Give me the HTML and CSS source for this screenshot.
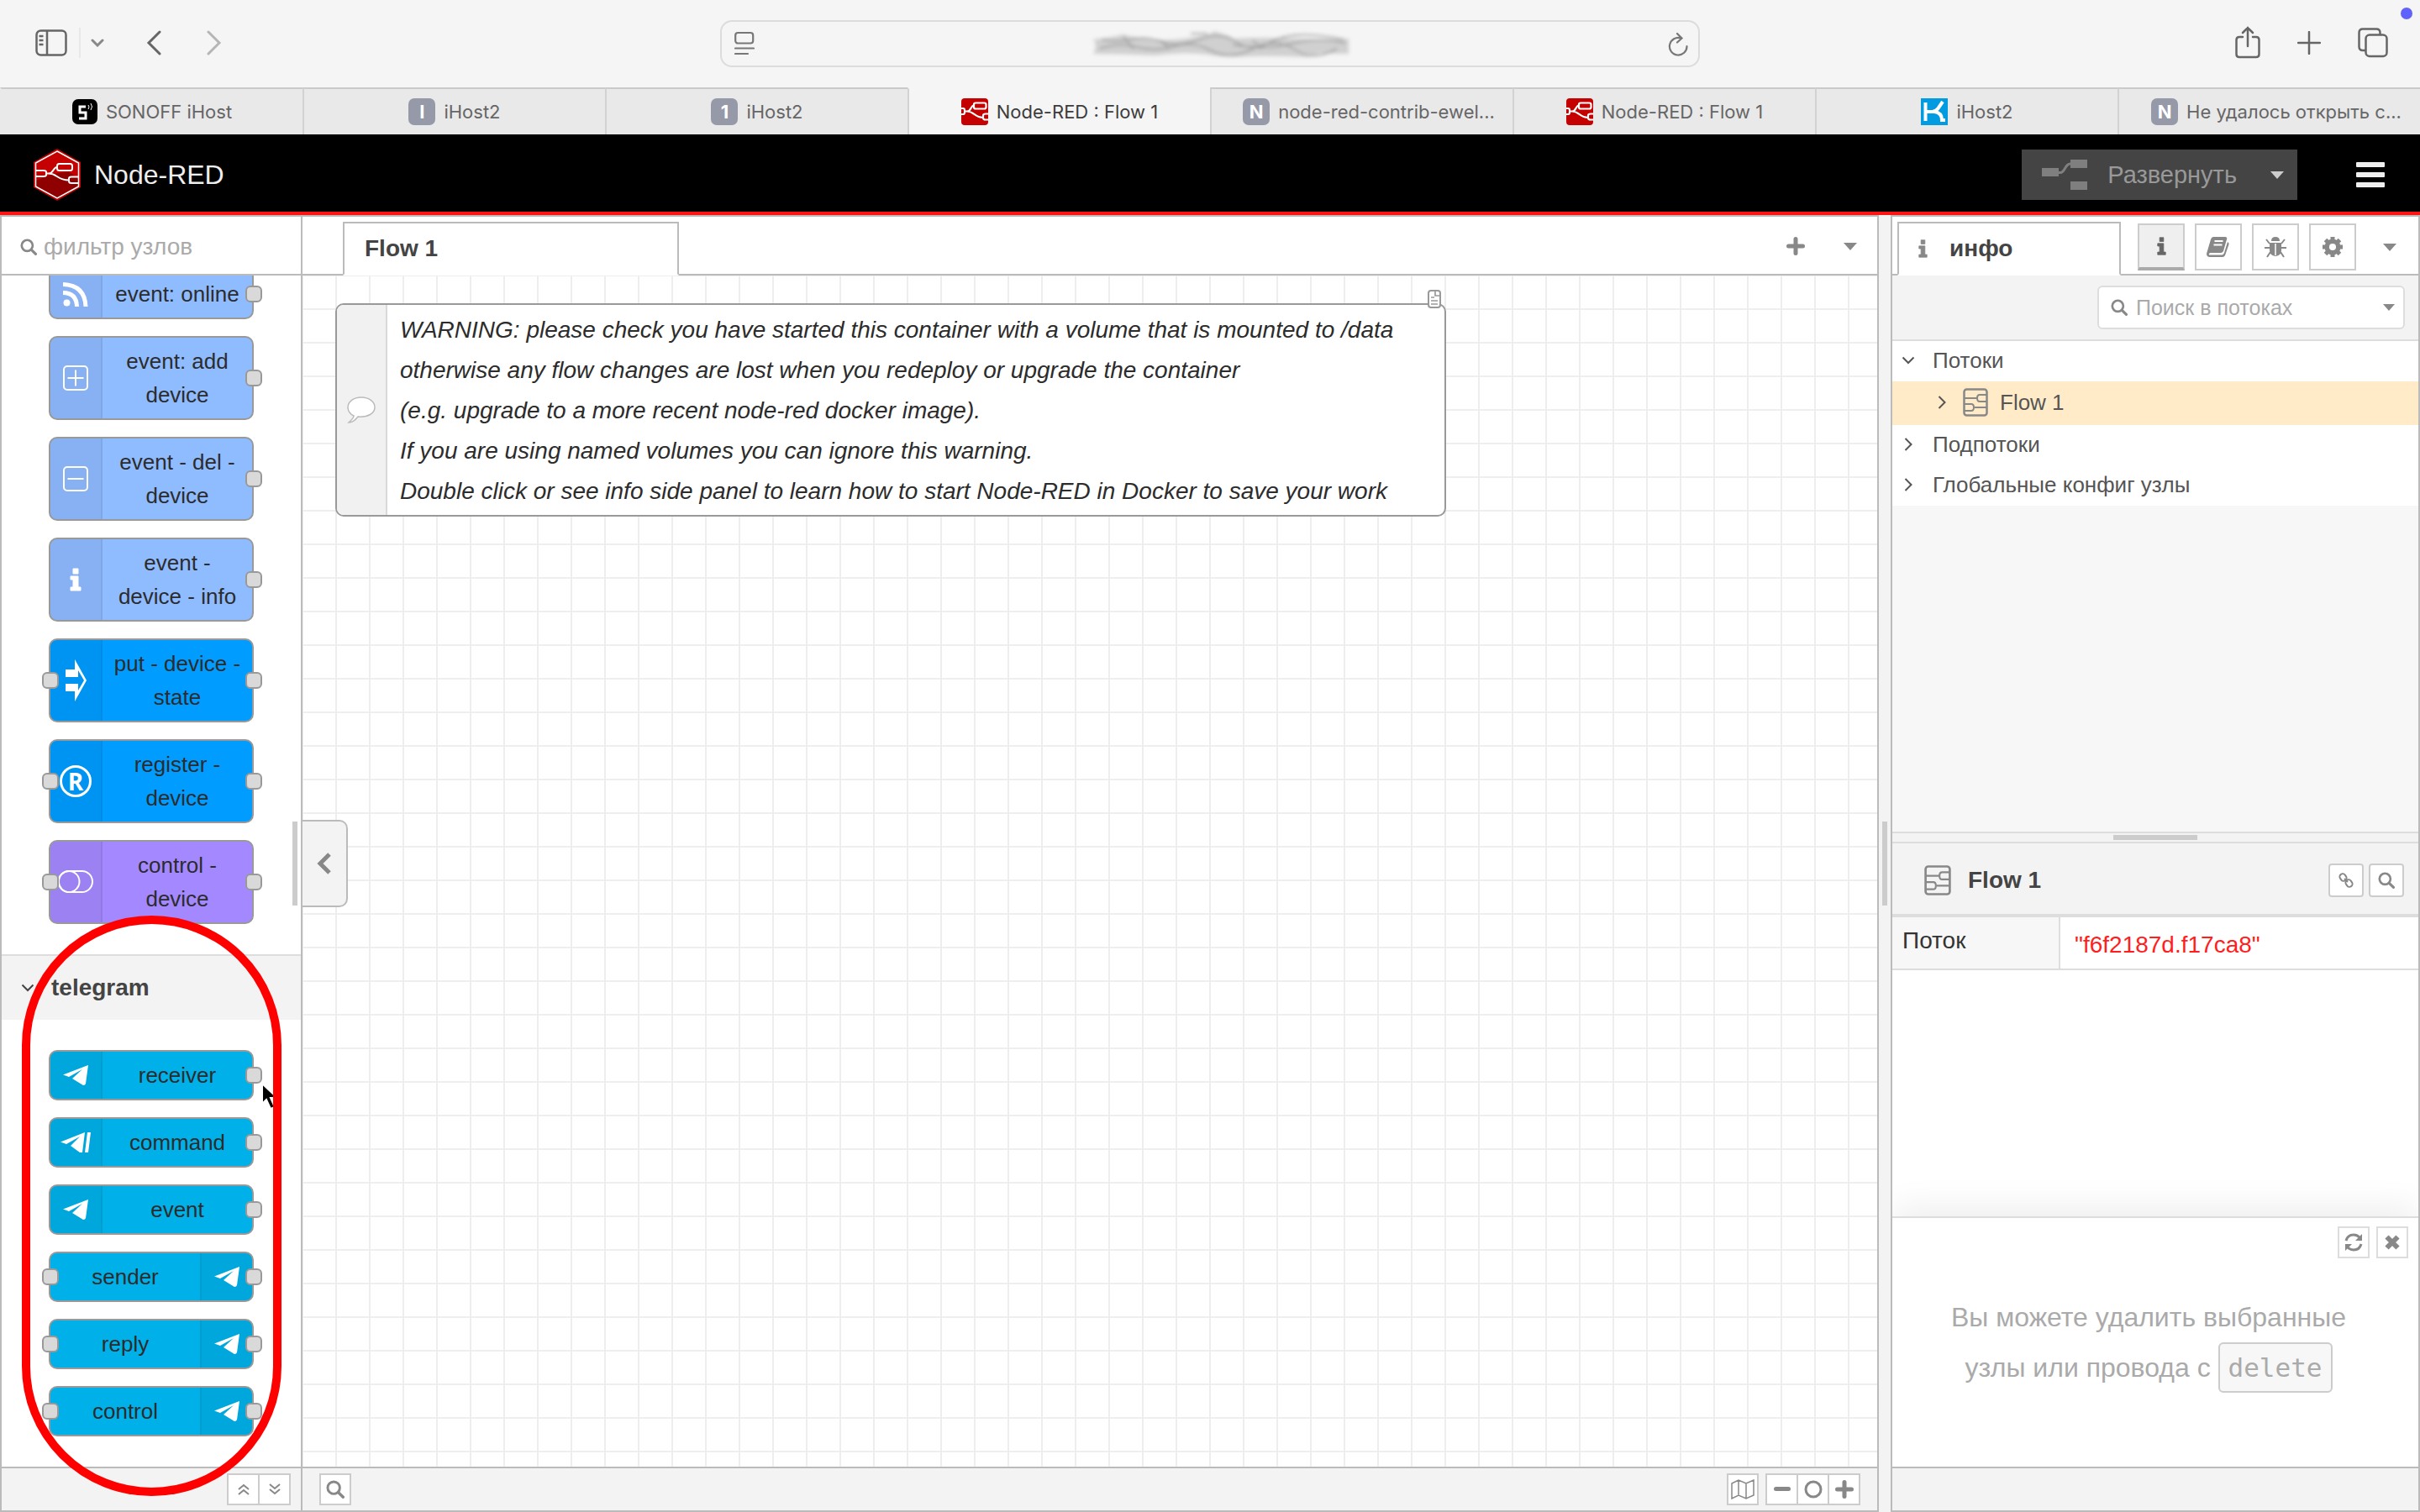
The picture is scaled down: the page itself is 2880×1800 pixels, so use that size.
FILE: index.html
```html
<!DOCTYPE html>
<html lang="ru">
<head>
  <meta charset="UTF-8" />
  <meta name="viewport" content="width=device-width, initial-scale=1.0" />
  <title>Node-RED : Flow 1</title>
  <link rel="stylesheet" href="styles.css">
</head>
<body>
  <!-- Shared icons -->
  <svg class="symbols" width="0" height="0" aria-hidden="true">
    <symbol id="i-search" viewBox="0 0 18 18">
      <circle cx="7.5" cy="7.5" r="5.9" fill="none" stroke="currentColor" stroke-width="2.4" />
      <path d="M12 12l4.6 4.6" stroke="currentColor" stroke-width="2.8" stroke-linecap="round" />
    </symbol>
    <symbol id="i-caret" viewBox="0 0 16 9"><path d="M0 0h16l-8 9z" fill="currentColor" /></symbol>
    <symbol id="i-right" viewBox="0 0 10 18"><path d="M1.5 2l7 7-7 7" fill="none" stroke="currentColor" stroke-width="2" /></symbol>
    <symbol id="i-down" viewBox="0 0 16 10"><path d="M1.500 1.500l6.500 6.500 6.500-6.500" fill="none" stroke="currentColor" stroke-width="2" /></symbol>
    <symbol id="i-plus" viewBox="0 0 22 22"><path d="M11 2.500v17M2.500 11h17" stroke="currentColor" stroke-width="5" stroke-linecap="round" /></symbol>
    <symbol id="i-info" viewBox="0 0 14 28">
      <path d="M4 1h6v6H4zM1 10h9v13h3v4H1v-4h3v-9H1z" fill="currentColor" stroke="currentColor" stroke-linejoin="round" />
    </symbol>
    <symbol id="i-flow" viewBox="0 0 30 34">
      <g fill="none" stroke="currentColor" stroke-width="2">
        <rect x="1.500" y="1.500" width="27" height="31" rx="3" stroke-width="2.500" />
        <path d="M2 12h15M14 23h14M28 8h-8q-3 0-3 4t3 4h8M2 19h8q3 0 3 4t-3 4H2" />
      </g>
    </symbol>
    <symbol id="i-plane" viewBox="0 0 30 24">
      <path d="M30 0L0 11.500l7 2.500L23 5 11 16l13 8q2.500 0 3-2z" fill="#fff" />
    </symbol>
    <symbol id="i-nr" viewBox="0 0 32 32">
      <rect width="32" height="32" rx="4" fill="#c40000" />
      <g fill="none" stroke="#fff" stroke-width="2.200">
        <rect x="15" y="5.500" width="14.500" height="7" rx="2" />
        <path d="M0 12h2q2 0 2 2v3q0 2-2 2H0M32 18.500h-3q-3 0-3 2v3q0 2 3 2h3M4 15.500h3c5 0 4-7 8-7M7 15.500c8 0 9 7.500 19 7.500" />
      </g>
    </symbol>
  </svg>

  <!-- Browser chrome -->
  <div class="toolbar">
    <div class="toolbar-left">
      <button aria-label="Sidebar"><svg width="38" height="32" viewBox="0 0 38 32" fill="none" stroke="currentColor" stroke-width="2.500"><rect x="1.500" y="1.500" width="35" height="29" rx="5" /><path d="M14 2v28M4.500 8h5M4.500 13h5M4.500 18h5" /></svg></button>
      <span class="toolbar-divider"></span>
      <button class="drop" aria-label="Tab groups"><svg width="16" height="10"><path d="M2 2l6 6 6-6" fill="none" stroke="currentColor" stroke-width="3" stroke-linecap="round" /></svg></button>
      <button class="back" aria-label="Back"><svg width="18" height="30"><path d="M16 2L3 15l13 13" fill="none" stroke="currentColor" stroke-width="3" stroke-linecap="round" /></svg></button>
      <button class="forward" aria-label="Forward"><svg width="18" height="30"><path d="M2 2l13 13L2 28" fill="none" stroke="currentColor" stroke-width="3" stroke-linecap="round" /></svg></button>
    </div>
    <div class="address">
      <svg width="24" height="30" viewBox="0 0 24 30" fill="none" stroke="#777" stroke-width="2.200"><rect x="1.200" y="2" width="21" height="12.500" rx="3" /><path d="M1 20.500h22M1 27h15" stroke-linecap="round" /></svg>
      <svg class="smudge" width="330" height="44" viewBox="0 0 330 44">
        <path d="M14 17q20-2 36-6 14 4 34 6t46-2 26-7 26 8q40-2 74 0t62 0v18q-24 0-34-1-10 5-18 5-30-2-64-1-30 2-52-2-26-4-62 1-40-2-74-2 6-10 0-17z" fill="#d0d0d0" />
        <path d="M24 17q18 4 36 0t36 3 44-3 44 3 44-1 84-2M22 28q22-8 44-2t44-1 44 5 50-2 50 1 50-1M130 10h20M180 23q40 7 70-1t64-1M50 14l12 14M94 18l10 10M204 18l10 10" fill="none" stroke="#999" stroke-width="1.500" />
      </svg>
      <svg width="24" height="32" viewBox="0 0 24 32" fill="none" stroke="#777" stroke-width="2.200" stroke-linecap="round"><path d="M15.500 9.500A10.300 10.300 0 1 0 22.500 19M11 4l5.500 5.500-5.500 5" /></svg>
    </div>
    <div class="toolbar-right">
      <button aria-label="Share"><svg width="30" height="40" viewBox="0 0 30 40" fill="none" stroke="currentColor" stroke-width="2.500" stroke-linecap="round"><path d="M9 13H5q-3.500 0-3.500 3.500v17q0 3.500 3.500 3.500h20q3.500 0 3.500-3.500v-17q0-3.500-3.500-3.500h-4M15 24V2M9 8l6-6 6 6" /></svg></button>
      <button aria-label="New tab"><svg width="28" height="28"><path d="M14 1v26M1 14h26" stroke="currentColor" stroke-width="2.500" stroke-linecap="round" /></svg></button>
      <button aria-label="All tabs"><svg width="36" height="36" viewBox="0 0 36 36" fill="none" stroke="currentColor" stroke-width="2.500"><path d="M9 27H6q-4.500 0-4.500-4.500V6Q1.500 1.500 6 1.500h16q4.500 0 4.500 4.500v2.500" /><rect x="9.500" y="8.500" width="25" height="25.500" rx="4.500" /></svg></button>
    </div>
    <span class="status-dot"></span>
  </div>

  <nav class="tabs">
    <a href="#"><svg width="30" height="30" viewBox="0 0 30 30"><rect width="30" height="30" rx="7" fill="#000" /><path d="M16 9H9v7h7v7H8" fill="none" stroke="#fff" stroke-width="3" /><path d="M19 7q2 2 0 5M22 5q3 4 0 8" fill="none" stroke="#fff" /></svg>SONOFF iHost</a>
    <a href="#"><span class="favicon">I</span>iHost2</a>
    <a href="#"><span class="favicon">1</span>iHost2</a>
    <a href="#" class="active"><svg width="32" height="32"><use href="#i-nr" /></svg>Node-RED : Flow 1</a>
    <a href="#" class="long"><span class="favicon">N</span>node-red-contrib-ewel...</a>
    <a href="#"><svg width="32" height="32"><use href="#i-nr" /></svg>Node-RED : Flow 1</a>
    <a href="#"><svg width="32" height="32" viewBox="0 0 32 32"><rect width="32" height="32" fill="#009be0" /><path d="M5.500 5v22M5.500 16h8q4 0 7-4l5.500-8M16 16q9 1 9 10h4" fill="none" stroke="#fff" stroke-width="4" /></svg>iHost2</a>
    <a href="#" class="long"><span class="favicon">N</span>Не удалось открыть с...</a>
  </nav>

  <!-- Node-RED editor -->
  <header class="header">
    <svg width="56" height="62" viewBox="0 0 56 62">
      <path d="M28 0l28 16v30L28 62 0 46V16z" fill="#c40000" />
      <path d="M42 27l12 10v8L28 60 3 45V38l20-8z" fill="#8f0000" />
      <g fill="none" stroke="#fff" stroke-width="2">
        <path d="M28 3l25.500 14v28L28 59 2.500 45V17z" stroke-width="1.500" />
        <rect x="28" y="18" width="18" height="8" rx="2.500" fill="#c40000" />
        <path d="M3 26h9q3 0 3 2v3q0 2-3 2H3M53 33.500h-8q-3 0-3 2v3q0 2.500 3 2.500h8M15 29.500h3c6 0 5-7.500 10-7.500M18 29.500c10 0 10 8 24 8" />
      </g>
    </svg>
    <h1>Node-RED</h1>
    <button class="deploy">
      <svg width="54" height="36" viewBox="0 0 54 36"><path d="M0 10h20v10H0zM34 0h20v10H34zM34 26h20v10H34z" fill="#7f7f7f" /><path d="M20 15.500h2c6 0 5-10.500 12-10.500" fill="none" stroke="#7f7f7f" stroke-width="3" /></svg>
      <span>Развернуть</span>
      <svg class="deploy-caret" width="16" height="9"><use href="#i-caret" /></svg>
    </button>
    <button class="menu" aria-label="Меню"><svg width="34" height="30" fill="#eee"><rect width="34" height="6" rx="1" /><rect y="12" width="34" height="6" rx="1" /><rect y="24" width="34" height="6" rx="1" /></svg></button>
  </header>

  <main class="editor">
    <aside class="palette">
      <label class="palette-search">
        <svg width="20" height="20"><use href="#i-search" /></svg>
        <input type="text" placeholder="фильтр узлов">
      </label>
      <div class="palette-list">
        <div class="nodes">
          <div class="node event out">
            <span class="node-icon"><svg width="30" height="30" viewBox="0 0 30 30" fill="none" stroke="#fff" stroke-width="5"><circle cx="4.500" cy="25.500" r="4" fill="#fff" stroke="none" /><path d="M0 13.500q16 0 16.500 16.500M0 3.500q26 1 27 26.500" /></svg></span>
            <span class="node-label">event: online</span>
          </div>
          <div class="node event out">
            <span class="node-icon"><svg width="30" height="30" fill="none" stroke="#fff" stroke-width="2"><rect x="1" y="1" width="28" height="28" rx="4" /><path d="M15 5.500v19M5.500 15h19" /></svg></span>
            <span class="node-label">event: add<br>device</span>
          </div>
          <div class="node event out">
            <span class="node-icon"><svg width="30" height="30" fill="none" stroke="#fff" stroke-width="2"><rect x="1" y="1" width="28" height="28" rx="4" /><path d="M5.500 15h19" /></svg></span>
            <span class="node-label">event - del -<br>device</span>
          </div>
          <div class="node event out">
            <span class="node-icon"><svg width="14" height="28"><use href="#i-info" /></svg></span>
            <span class="node-label">event -<br>device - info</span>
          </div>
          <div class="node action in out">
            <span class="node-icon"><svg width="26" height="50" viewBox="0 0 26 50" fill="#fff"><path d="M1 12h11V0l14 25-14 25V38H1v-9h15v8l7-12-7-12v8H1z" /></svg></span>
            <span class="node-label">put - device -<br>state</span>
          </div>
          <div class="node action in out">
            <span class="node-icon"><span class="registered">R</span></span>
            <span class="node-label">register -<br>device</span>
          </div>
          <div class="node control in out">
            <span class="node-icon"><svg width="42" height="28" fill="none" stroke="#fff" stroke-width="2"><rect x="1" y="1" width="40" height="25" rx="12.500" /><circle cx="13" cy="13.500" r="12.500" /></svg></span>
            <span class="node-label">control -<br>device</span>
          </div>
        </div>
        <h2 class="category"><svg width="16" height="10"><use href="#i-down" /></svg>telegram</h2>
        <div class="nodes">
          <div class="node telegram out">
            <span class="node-icon"><svg width="30" height="24"><use href="#i-plane" /></svg></span>
            <span class="node-label">receiver</span>
          </div>
          <div class="node telegram out">
            <span class="node-icon"><svg width="36" height="24" viewBox="0 0 36 24"><path d="M29 0L0 11.500l7 2.500L23 5 12 16l11 8h3zM32 0h4l-3 24h-4z" fill="#fff" /></svg></span>
            <span class="node-label">command</span>
          </div>
          <div class="node telegram out">
            <span class="node-icon"><svg width="30" height="24"><use href="#i-plane" /></svg></span>
            <span class="node-label">event</span>
          </div>
          <div class="node telegram in out flip">
            <span class="node-icon"><svg width="30" height="24"><use href="#i-plane" /></svg></span>
            <span class="node-label">sender</span>
          </div>
          <div class="node telegram in out flip">
            <span class="node-icon"><svg width="30" height="24"><use href="#i-plane" /></svg></span>
            <span class="node-label">reply</span>
          </div>
          <div class="node telegram in out flip">
            <span class="node-icon"><svg width="30" height="24"><use href="#i-plane" /></svg></span>
            <span class="node-label">control</span>
          </div>
        </div>
        <span class="scroll-thumb"></span>
      </div>
      <footer class="footer palette-footer">
        <div class="btn-group">
          <button aria-label="Свернуть"><svg width="14" height="14" fill="none" stroke="currentColor" stroke-width="2"><path d="M1 7l6-5 6 5M1 13l6-5 6 5" /></svg></button>
          <button aria-label="Развернуть все"><svg width="14" height="14" fill="none" stroke="currentColor" stroke-width="2"><path d="M1 1l6 5 6-5M1 7l6 5 6-5" /></svg></button>
        </div>
      </footer>
      <!-- cursor and marker over the telegram group -->
      <svg class="cursor" width="22" height="34" viewBox="0 0 22 34"><path d="M2 2v24l5-5 5 11 5-2-5-11h8z" fill="#000" stroke="#fff" stroke-width="2" /></svg>
      <span class="marker"></span>
    </aside>

    <section class="workspace">
      <div class="workspace-tabs">
        <a href="#" class="tab">Flow 1</a>
        <button aria-label="Добавить поток"><svg width="22" height="22"><use href="#i-plus" /></svg></button>
        <button aria-label="Список потоков"><svg width="16" height="9"><use href="#i-caret" /></svg></button>
      </div>
      <div class="canvas">
        <div class="comment">
          <span class="comment-icon"><svg width="34" height="32" viewBox="0 0 34 32"><path d="M17 1C8 1 1 6 1 13c0 5 3 8 7 10 0 3-3 5-6 8 4 0 8-3 11-7 12 1 20-4 20-11S26 1 17 1z" fill="#fff" stroke="#bbb" stroke-width="1.500" /></svg></span>
          <p>WARNING: please check you have started this container with a volume that is mounted to /data<br>
            otherwise any flow changes are lost when you redeploy or upgrade the container<br>
            (e.g. upgrade to a more recent node-red docker image).<br>
            If you are using named volumes you can ignore this warning.<br>
            Double click or see info side panel to learn how to start Node-RED in Docker to save your work</p>
          <svg class="comment-doc" width="16" height="22" viewBox="0 0 16 22" fill="#fff" stroke="#999" stroke-width="2"><rect x="1" y="1" width="14" height="20" rx="3" /><path d="M9 2v5h5M4 9h4M4 13h8M4 17h8" stroke-width="1.700" /></svg>
        </div>
        <button class="collapse" aria-label="Скрыть палитру"><svg width="18" height="26"><path d="M15 2L4 13l11 11" fill="none" stroke="currentColor" stroke-width="5" /></svg></button>
      </div>
      <footer class="footer workspace-footer">
        <button class="square" aria-label="Поиск"><svg width="22" height="22"><use href="#i-search" /></svg></button>
        <button class="square map" aria-label="Карта"><svg width="28" height="24" fill="none" stroke="currentColor" stroke-width="1.500"><path d="M1 5l8-4 9 4 9-4v18l-9 4-9-4-8 4zM9 1v18M18 5v18" /></svg></button>
        <div class="btn-group">
          <button aria-label="Уменьшить"><svg width="22" height="22"><path d="M3.500 10.500h15" stroke="currentColor" stroke-width="5" stroke-linecap="round" /></svg></button>
          <button aria-label="Сбросить масштаб"><svg width="22" height="22"><circle cx="11" cy="11" r="9" fill="none" stroke="currentColor" stroke-width="3" /></svg></button>
          <button aria-label="Увеличить"><svg width="22" height="22"><use href="#i-plus" /></svg></button>
        </div>
      </footer>
    </section>

    <div class="separator"><span></span></div>

    <aside class="sidebar">
      <div class="sidebar-tabs">
        <a href="#" class="tab"><svg width="11" height="24"><use href="#i-info" /></svg>инфо</a>
        <button class="active" aria-label="Информация"><svg width="11" height="24"><use href="#i-info" /></svg></button>
        <button aria-label="Помощь"><svg width="28" height="26" viewBox="0 0 28 26"><path d="M8 1h14q3 0 2 3l-4 14q-1 2-3 2H4q-2 1-1 2.500h15q2 0 3-2.500l4-13q2 1 1.500 3L22 23q-1 2-3 2H4q-4 0-4-4L5 4q1-3 3-3z" fill="currentColor" /><path d="M9.500 6h10M8.500 10.500h10" stroke="#fff" stroke-width="1.800" /></svg></button>
        <button aria-label="Отладка"><svg width="26" height="26" viewBox="0 0 26 26"><path d="M8 6q0-5 5-5t5 5zM6 8h14v9q0 6-7 7-7-1-7-7z" fill="currentColor" /><path d="M6 9L2 4M20 9l4-5M6 14H0M20 14h6M7 19l-4 6M19 19l4 6" stroke="currentColor" stroke-width="2" /><path d="M13 9v14" stroke="#fff" stroke-width="1.500" /></svg></button>
        <button aria-label="Настройки"><svg width="26" height="26" viewBox="0 0 26 26" fill="none" stroke="currentColor"><circle cx="13" cy="13" r="6.800" stroke-width="5.500" /><path d="M13 1v4M13 21v4M1 13h4M21 13h4M4.500 4.500l3 3M18.500 18.500l3 3M4.500 21.500l3-3M18.500 7.500l3-3" stroke-width="5" /></svg></button>
        <button class="plain" aria-label="Вкладки"><svg width="16" height="9"><use href="#i-caret" /></svg></button>
      </div>
      <div class="outline-toolbar">
        <label class="outline-search">
          <svg width="20" height="20"><use href="#i-search" /></svg>
          <input type="text" placeholder="Поиск в потоках">
          <svg width="14" height="8" viewBox="0 0 16 9"><use href="#i-caret" /></svg>
        </label>
      </div>
      <ul class="outline">
        <li><span class="chevron"><svg width="16" height="10"><use href="#i-down" /></svg></span>Потоки</li>
        <li class="selected"><span class="chevron"><svg width="10" height="18"><use href="#i-right" /></svg></span><svg class="flow-icon" width="30" height="34"><use href="#i-flow" /></svg>Flow 1</li>
        <li><span class="chevron"><svg width="10" height="18"><use href="#i-right" /></svg></span>Подпотоки</li>
        <li><span class="chevron"><svg width="10" height="18"><use href="#i-right" /></svg></span>Глобальные конфиг узлы</li>
      </ul>
      <div class="panel-separator"><span></span></div>
      <div class="info">
        <div class="info-header">
          <svg width="32" height="38" viewBox="0 0 30 34"><use href="#i-flow" /></svg>
          <h3>Flow 1</h3>
          <button aria-label="Ссылка"><svg width="18" height="18" fill="none" stroke="currentColor" stroke-width="2"><rect x="2" y="1" width="7" height="9" rx="3.500" transform="rotate(-35 5.500 5.500)" /><rect x="9" y="8" width="7" height="9" rx="3.500" transform="rotate(-35 12.500 12.500)" /><path d="M7 7l4 4" /></svg></button>
          <button aria-label="Найти"><svg width="20" height="20"><use href="#i-search" /></svg></button>
        </div>
        <table>
          <tr><th scope="row">Поток</th><td>"f6f2187d.f17ca8"</td></tr>
        </table>
      </div>
      <div class="tips">
        <div class="tips-buttons">
          <button aria-label="Обновить"><svg width="22" height="22" viewBox="0 0 22 22" fill="none" stroke="currentColor" stroke-width="3"><path d="M2 9q2-7 9-7 4 0 7 3M20 13q-2 7-9 7-4 0-7-3" /><path d="M21 1v8h-8zM1 21v-8h8z" fill="currentColor" stroke="none" /></svg></button>
          <button aria-label="Закрыть"><svg width="20" height="20"><path d="M3.500 3.500l13 13M16.500 3.500l-13 13" stroke="currentColor" stroke-width="6" /></svg></button>
        </div>
        <p>Вы можете удалить выбранные<br>узлы или провода с <kbd>delete</kbd></p>
      </div>
      <footer class="footer"></footer>
    </aside>
  </main>
</body>
</html>
```

FILE: styles.css
```css
*,
*::before,
*::after {
  box-sizing: border-box;
}

body {
  margin: 0;
  height: 100vh;
  display: flex;
  flex-direction: column;
  overflow: hidden;
  font-family: "Liberation Sans", Arial, sans-serif;
  font-size: 28px;
  color: #333;
  background: #f3f3f3;
}

h1, h2, h3, p, ul {
  margin: 0;
  padding: 0;
}

svg {
  display: block;
  flex: none;
}

button {
  display: flex;
  align-items: center;
  justify-content: center;
  padding: 0;
  border: none;
  background: none;
  color: #888;
  font-family: inherit;
  cursor: pointer;
}

input {
  flex: 1;
  min-width: 0;
  border: none;
  outline: none;
  padding: 0;
  background: none;
  font-family: inherit;
}

input::placeholder {
  color: #aaa;
  opacity: 1;
}

a {
  color: inherit;
  text-decoration: none;
}

.symbols {
  position: absolute;
}

/* Browser chrome */
.toolbar {
  position: relative;
  height: 104px;
  flex: none;
  display: grid;
  grid-template-columns: 1fr 1166px 1fr;
  align-items: center;
  background: #f5f5f5;
}

.toolbar button {
  color: #666;
}

.toolbar-left {
  display: flex;
  align-items: center;
  padding: 0 0 2px 42px;
}

.toolbar-divider {
  width: 2px;
  height: 36px;
  margin: 0 12px 0 14px;
  background: #e8e8e8;
}

.toolbar .drop {
  color: #888;
}

.toolbar .back {
  margin-left: 50px;
}

.toolbar .forward {
  margin-left: 54px;
  color: #b5b5b5;
}

.address {
  height: 56px;
  display: flex;
  align-items: center;
  justify-content: space-between;
  padding: 0 12px 0 15px;
  border: 2px solid #dcdcdc;
  border-radius: 14px;
}

.smudge {
  margin-left: 20px;
  filter: blur(2px);
}

.toolbar-right {
  display: flex;
  align-items: center;
  justify-content: flex-end;
  gap: 44px;
  padding: 0 38px 2px 0;
}

.status-dot {
  position: absolute;
  top: 9px;
  right: 9px;
  width: 14px;
  height: 14px;
  border-radius: 50%;
  background: #6161ff;
}

.tabs {
  flex: none;
  height: 56px;
  display: grid;
  grid-template-columns: repeat(8, 1fr);
  font-family: Inter, sans-serif;
  font-size: 22px;
  color: #666;
}

.tabs a {
  display: flex;
  align-items: center;
  justify-content: center;
  gap: 10px;
  white-space: nowrap;
  background: #e9e9e9;
  border-top: 2px solid #cacaca;
  border-left: 2px solid #d2d2d2;
}

.tabs a:first-child {
  border-left-color: #e9e9e9;
}

.tabs .long {
  padding-left: 16px;
}

.tabs .active {
  background: #f5f5f5;
  border-top-color: #f5f5f5;
  color: #3c3c3c;
}

.favicon {
  width: 32px;
  height: 32px;
  border-radius: 7px;
  background: #9699a8;
  color: #fff;
  font-weight: 700;
  line-height: 32px;
  text-align: center;
}

/* Header */
.header {
  flex: none;
  height: 96px;
  display: flex;
  align-items: center;
  padding: 4px 42px 0 40px;
  background: #000;
  border-bottom: 4px solid #ff1414;
}

.header h1 {
  margin-left: 16px;
  font-size: 32px;
  font-weight: 400;
  color: #eee;
}

.header .deploy {
  height: 60px;
  margin-left: auto;
  padding: 0 16px 0 24px;
  gap: 24px;
  background: #444;
  color: #999;
  font-size: 29px;
}

.deploy-caret {
  margin-left: 16px;
  color: #ccc;
}

.header .menu {
  margin-left: 70px;
}

/* Editor */
.editor {
  flex: 1;
  min-height: 0;
  display: grid;
  grid-template-columns: 360px 1fr 14px 630px;
}

.palette,
.workspace,
.sidebar {
  min-height: 0;
  display: flex;
  flex-direction: column;
  border: 2px solid #bbb;
  background: #fff;
}

.footer {
  flex: none;
  height: 52px;
  display: flex;
  align-items: center;
  border-top: 2px solid #bbb;
  background: #f3f3f3;
}

.btn-group {
  display: flex;
  border: 2px solid #ccc;
  background: #fff;
}

.btn-group button {
  width: 35px;
  height: 34px;
}

.btn-group button + button {
  width: 37px;
  border-left: 2px solid #ccc;
}

/* Palette */
.palette {
  position: relative;
}

.palette-search {
  flex: none;
  height: 70px;
  display: flex;
  align-items: center;
  gap: 8px;
  padding: 4px 12px 0 22px;
  border-bottom: 2px solid #bbb;
  color: #888;
}

.palette-search input {
  font-size: 28px;
}

/* scrolled to the end, so the first nodes are cut off at the top */
.palette-list {
  position: relative;
  flex: 1;
  min-height: 0;
  display: flex;
  flex-direction: column;
  justify-content: flex-end;
  overflow: hidden;
}

.nodes {
  flex: none;
  display: flex;
  flex-direction: column;
  gap: 20px;
  padding: 36px 56px;
}

.node {
  position: relative;
  display: flex;
  border: 2px solid #999;
  border-radius: 10px;
  color: #2c2c2c;
}

.node-icon {
  width: 62px;
  display: flex;
  align-items: center;
  justify-content: center;
  background: rgba(0, 0, 0, 0.05);
  border-right: 2px solid rgba(0, 0, 0, 0.06);
  border-radius: 8px 0 0 8px;
  color: #fff;
}

.node-label {
  flex: 1;
  padding: 8px 0;
  font-size: 26px;
  line-height: 40px;
  text-align: center;
  white-space: nowrap;
}

.flip {
  flex-direction: row-reverse;
}

.flip .node-icon {
  border-right: none;
  border-left: 2px solid rgba(0, 0, 0, 0.06);
  border-radius: 0 8px 8px 0;
}

.event {
  background: #8fbbff;
}

.action {
  background: #009cff;
}

.control {
  background: #a488ff;
}

.telegram {
  background: #00b0e8;
}

/* ports */
.in::before,
.out::after {
  content: "";
  position: absolute;
  top: calc(50% - 10px);
  width: 20px;
  height: 20px;
  border: 2px solid #999;
  border-radius: 6px;
  background: #d9d9d9;
}

.in::before {
  left: -10px;
}

.out::after {
  right: -12px;
}

.registered {
  width: 38px;
  height: 38px;
  border: 3px solid #fff;
  border-radius: 50%;
  color: #fff;
  font-family: "Open Sans", sans-serif;
  font-size: 28px;
  font-weight: 700;
  line-height: 32px;
  text-align: center;
}

.category {
  flex: none;
  height: 78px;
  display: flex;
  align-items: center;
  gap: 20px;
  padding-left: 23px;
  border-top: 2px solid #ddd;
  background: #f3f3f3;
  font-size: 28px;
  color: #444;
}

.scroll-thumb {
  position: absolute;
  top: 650px;
  right: 4px;
  width: 6px;
  height: 100px;
  background: #ccc;
}

.palette-footer {
  justify-content: flex-end;
  padding-right: 12px;
}

.cursor {
  position: absolute;
  left: 308px;
  top: 1030px;
}

.marker {
  position: absolute;
  left: 24px;
  top: 832px;
  width: 309px;
  height: 691px;
  border: 10px solid #f00;
  border-radius: 155px;
}

/* Workspace */
.workspace {
  border-left: none;
}

.workspace-tabs {
  flex: none;
  height: 70px;
  display: flex;
  align-items: flex-end;
  padding: 0 24px 0 48px;
  border-bottom: 2px solid #bbb;
}

.tab {
  height: 64px;
  margin-bottom: -2px;
  display: flex;
  align-items: center;
  border: 2px solid #bbb;
  border-bottom-color: #fff;
  background: #fff;
  font-weight: 700;
  color: #444;
}

.workspace-tabs .tab {
  width: 400px;
  margin-right: auto;
  padding-left: 24px;
}

.workspace-tabs button {
  height: 66px;
  margin-left: 46px;
}

.canvas {
  position: relative;
  flex: 1;
  background-color: #fff;
  background-image:
    linear-gradient(#eee 2px, transparent 2px),
    linear-gradient(90deg, #eee 2px, transparent 2px);
  background-size: 40px 40px;
  background-position: -1px -1px;
}

.comment {
  position: absolute;
  left: 39px;
  top: 33px;
  width: 1322px;
  display: flex;
  border: 2px solid #999;
  border-radius: 10px;
  background: #fff;
}

.comment-icon {
  width: 60px;
  display: flex;
  align-items: center;
  justify-content: center;
  background: #f1f1f1;
  border-right: 2px solid #d9d9d9;
  border-radius: 8px 0 0 8px;
}

.comment p {
  padding: 6px 0 4px 15px;
  font-size: 28px;
  font-style: italic;
  line-height: 48px;
  color: #2c2c2c;
  white-space: nowrap;
}

.comment-doc {
  position: absolute;
  top: -18px;
  right: 4px;
}

.collapse {
  position: absolute;
  left: 0;
  top: 648px;
  width: 54px;
  height: 104px;
  border: 2px solid #bbb;
  border-left: none;
  border-radius: 0 10px 10px 0;
  background: #f3f3f3;
}

.workspace-footer {
  gap: 8px;
  padding: 0 20px;
}

.square {
  width: 38px;
  height: 38px;
  border: 2px solid #ccc;
  background: #fff;
}

.map {
  margin-left: auto;
}

.separator {
  display: flex;
  align-items: center;
  justify-content: center;
  background: #f3f3f3;
}

.separator span {
  width: 6px;
  height: 100px;
  background: #ccc;
}

/* Sidebar */
.sidebar-tabs {
  flex: none;
  height: 70px;
  display: flex;
  align-items: flex-end;
  padding-left: 6px;
  border-bottom: 2px solid #bbb;
}

.sidebar-tabs .tab {
  width: 266px;
  gap: 26px;
  padding-left: 23px;
  margin-right: 8px;
}

.sidebar-tabs .tab svg {
  color: #888;
}

.sidebar-tabs button {
  width: 56px;
  height: 56px;
  margin: 0 0 4px 12px;
  border: 2px solid #ccc;
}

.sidebar-tabs .active {
  background: #efefef;
  border-bottom: 4px solid #aaa;
  color: #666;
}

.sidebar-tabs .plain {
  border: none;
}

.outline-toolbar {
  flex: none;
  height: 78px;
  display: flex;
  align-items: center;
  justify-content: flex-end;
  padding-right: 16px;
  border-bottom: 2px solid #ddd;
  background: #f3f3f3;
}

.outline-search {
  width: 366px;
  height: 52px;
  display: flex;
  align-items: center;
  gap: 10px;
  padding: 0 10px 0 14px;
  border: 2px solid #ddd;
  border-radius: 6px;
  background: #fff;
  color: #888;
}

.outline-search input {
  font-size: 25px;
}

.outline {
  flex: 1;
  list-style: none;
  background: #f7f7f7;
}

.outline li {
  height: 48px;
  display: flex;
  align-items: center;
  padding-bottom: 2px;
  background: #fff;
  font-size: 26px;
  color: #555;
}

.outline .selected {
  height: 52px;
  padding-left: 40px;
  background: #ffebc7;
}

.chevron {
  width: 38px;
  margin-right: 10px;
  display: flex;
  justify-content: center;
}

.selected .chevron {
  margin-right: 6px;
}

.flow-icon {
  margin-right: 14px;
  color: #888;
}

.panel-separator {
  flex: none;
  height: 14px;
  display: flex;
  align-items: center;
  justify-content: center;
  border: 2px solid #ddd;
  border-width: 2px 0;
  background: #f3f3f3;
}

.panel-separator span {
  width: 100px;
  height: 6px;
  background: #ccc;
}

.info {
  flex: none;
  height: 444px;
}

.info-header {
  height: 88px;
  display: flex;
  align-items: center;
  gap: 6px;
  padding: 4px 17px 0 38px;
  border-bottom: 4px solid #ddd;
  background: #f3f3f3;
  color: #888;
}

.info-header h3 {
  margin: 0 auto 0 14px;
  font-size: 28px;
  color: #444;
}

.info-header button {
  width: 42px;
  height: 40px;
  border: 2px solid #ccc;
  border-radius: 4px;
  background: #fff;
}

.info table {
  width: 100%;
  border-collapse: collapse;
}

.info th,
.info td {
  height: 62px;
  padding: 0 0 0 17px;
  border-bottom: 2px solid #ddd;
  text-align: left;
  font-weight: 400;
}

.info th {
  width: 199px;
  padding: 0 0 6px 12px;
  border-right: 2px solid #ddd;
  background: #f7f7f7;
}

.info td {
  padding-top: 4px;
  color: #ff1e1e;
}

.tips {
  flex: none;
  height: 298px;
  border-top: 2px solid #ddd;
  box-shadow: 0 -8px 40px rgba(0, 0, 0, 0.08);
  clip-path: inset(-60px 0 0 0);
  text-align: center;
}

.tips-buttons {
  display: flex;
  justify-content: flex-end;
  gap: 8px;
  padding: 10px 12px 0;
}

.tips-buttons button {
  width: 38px;
  height: 38px;
  border: 2px solid #ddd;
}

.tips p {
  padding: 40px 16px 0 0;
  font-size: 32px;
  line-height: 60px;
  color: #aaa;
}

kbd {
  padding: 10px;
  border: 2px solid #ccc;
  border-radius: 6px;
  background: #f7f7f7;
  font-family: "DejaVu Sans Mono", monospace;
  font-size: 31px;
}
```
